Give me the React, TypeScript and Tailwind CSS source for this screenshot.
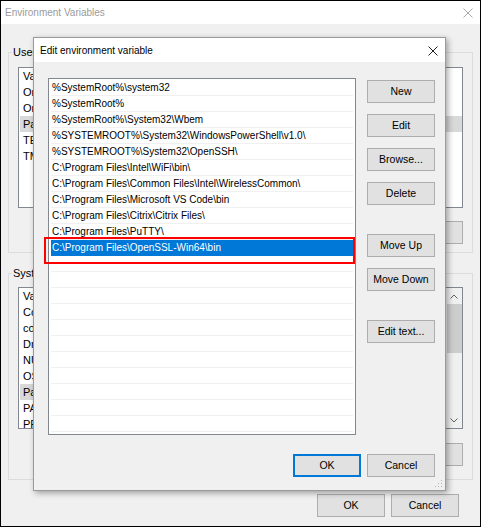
import React from 'react';

const font = "font-['Liberation_Sans',Arial,sans-serif]";

const CloseIcon = ({ color }: { color: string }) => (
  <svg width="10" height="10" viewBox="0 0 10 10" className="block">
    <path d="M0.5 0.5 L9.5 9.5 M9.5 0.5 L0.5 9.5" stroke={color} strokeWidth="1" fill="none" />
  </svg>
);

const Button = ({ label, def = false, w = 'w-[68px]' }: { label: string; def?: boolean; w?: string }) => (
  <div
    className={`${w} h-[23px] shrink-0 flex items-center justify-center bg-[#e1e1e1] border text-[10.5px] text-black ${
      def ? 'border-[#0078d7] shadow-[inset_0_0_0_1px_#0078d7]' : 'border-[#adadad]'
    }`}
  >
    {label}
  </div>
);

const userVars = ['Variable', 'OneDrive', 'OneDriveConsumer', 'Path', 'TEMP', 'TMP'];
const sysVars = ['Variable', 'ComSpec', 'configsetroot', 'DriverData', 'NUMBER_OF_PROCESSORS', 'OS', 'Path', 'PATHEXT', 'PROCESSOR_ARCHITECTURE'];

const paths = [
  '%SystemRoot%\\system32',
  '%SystemRoot%',
  '%SystemRoot%\\System32\\Wbem',
  '%SYSTEMROOT%\\System32\\WindowsPowerShell\\v1.0\\',
  '%SYSTEMROOT%\\System32\\OpenSSH\\',
  'C:\\Program Files\\Intel\\WiFi\\bin\\',
  'C:\\Program Files\\Common Files\\Intel\\WirelessCommon\\',
  'C:\\Program Files\\Microsoft VS Code\\bin',
  'C:\\Program Files\\Citrix\\Citrix Files\\',
  'C:\\Program Files\\PuTTY\\',
  'C:\\Program Files\\OpenSSL-Win64\\bin',
];

const OuterList = ({ items, height, scroll = false }: { items: string[]; height: string; scroll?: boolean }) => (
  <div className={`${height} bg-white border border-[#828790] flex overflow-hidden`}>
    <div className="flex-1 flex flex-col">
      {items.map((v, i) => (
        <div
          key={i}
          className={`h-[16px] leading-[17px] text-[11px] pl-[3px] ml-[1px] whitespace-nowrap ${v === 'Path' ? 'bg-[#d9d9d9]' : ''}`}
        >
          {v}
        </div>
      ))}
    </div>
    {scroll && (
      <div className="w-[16px] bg-[#f0f0f0] flex flex-col items-center">
        <div className="h-[16px] flex items-center justify-center">
          <svg width="8" height="5" viewBox="0 0 8 5"><path d="M0.5 4.5 L4 1 L7.5 4.5" stroke="#606060" fill="none" /></svg>
        </div>
        <div className="w-[15px] h-[49px] bg-[#cdcdcd]" />
        <div className="flex-1" />
        <div className="h-[16px] flex items-center justify-center">
          <svg width="8" height="5" viewBox="0 0 8 5"><path d="M0.5 0.5 L4 4 L7.5 0.5" stroke="#606060" fill="none" /></svg>
        </div>
      </div>
    )}
  </div>
);

const EditDialog = () => {
  const rows = Array.from({ length: 22 }, (_, i) => paths[i] ?? '');
  return (
    <div className="absolute left-[32px] top-[36px] w-[413px] h-[454px] border border-[#9a9a9a] bg-[#f0f0f0] shadow-[2px_2px_6px_rgba(0,0,0,0.35)] flex flex-col">
      {/* title bar */}
      <div className="h-[24px] bg-white flex items-center justify-between pl-[6px] pr-[7px] pt-[1px] text-[10px] text-black">
        <span>Edit environment variable</span>
        <CloseIcon color="#222" />
      </div>

      <div className="flex pt-[16px] pl-[14px]">
        {/* list */}
        <div className="w-[308px] h-[357px] bg-white border border-[#828790] overflow-hidden flex flex-col pt-[1px]">
          {rows.map((p, i) => (
            <div
              key={i}
              className={`h-[16px] shrink-0 mx-[2px] pl-[1px] leading-[16px] text-[10px] whitespace-nowrap ${
                i === 10 ? 'bg-[#0078d7] text-white' : 'text-black shadow-[inset_0_-1px_0_#f0f0f0]'
              }`}
            >
              {p}
            </div>
          ))}
        </div>

        {/* side buttons */}
        <div className="ml-[11px] pt-[2px] flex flex-col">
          <Button label="New" />
          <div className="h-[11px]" />
          <Button label="Edit" />
          <div className="h-[11px]" />
          <Button label="Browse..." />
          <div className="h-[11px]" />
          <Button label="Delete" />
          <div className="h-[29px]" />
          <Button label="Move Up" />
          <div className="h-[11px]" />
          <Button label="Move Down" />
          <div className="h-[29px]" />
          <Button label="Edit text..." />
        </div>
      </div>

      <div className="flex justify-end gap-[6px] mt-[19px] pr-[10px]">
        <Button label="OK" def />
        <Button label="Cancel" />
      </div>

      {/* highlight annotation */}
      <div className="absolute left-[10px] top-[199px] w-[311px] h-[27px] border-2 border-[#ff0000]" />

      {/* resize grip */}
      <svg width="10" height="10" viewBox="0 0 10 10" className="absolute right-[1px] bottom-[1px]">
        <rect x="7" y="1" width="1" height="1" fill="#b5b5b5" />
        <rect x="4" y="4" width="1" height="1" fill="#b5b5b5" />
        <rect x="7" y="4" width="1" height="1" fill="#b5b5b5" />
        <rect x="1" y="7" width="1" height="1" fill="#b5b5b5" />
        <rect x="4" y="7" width="1" height="1" fill="#b5b5b5" />
        <rect x="7" y="7" width="1" height="1" fill="#b5b5b5" />
      </svg>
    </div>
  );
};

export default function App() {
  return (
    <div className={`${font} relative w-[481px] h-[527px] border border-black bg-[#f0f0f0] overflow-hidden text-black`}>
      {/* outer title bar */}
      <div className="h-[23px] bg-white flex items-center justify-between pl-[4px] pr-[7px] text-[10px] text-[#9b9b9b]">
        <span>Environment Variables</span>
        <CloseIcon color="#a8a8a8" />
      </div>

      <div className="px-[7px]">
        <fieldset className="mt-[20px] border border-[#dcdcdc] px-[9px] pb-[8px]">
          <legend className="ml-[-6px] px-[1px] text-[11px] leading-[16px]">User variables for user</legend>
          <div className="pt-[7px]">
            <OuterList items={userVars} height="h-[141px]" />
          </div>
          <div className="flex justify-end gap-[7px] mt-[13px]">
            <Button label="New..." w="w-[75px]" />
            <Button label="Edit..." w="w-[75px]" />
            <Button label="Delete" w="w-[75px]" />
          </div>
        </fieldset>

        <fieldset className="mt-[12px] border border-[#dcdcdc] px-[9px] pb-[13px]">
          <legend className="ml-[-6px] px-[1px] text-[11px] leading-[16px]">System variables</legend>
          <div className="pt-[6px]">
            <OuterList items={sysVars} height="h-[142px]" scroll />
          </div>
          <div className="flex justify-end gap-[7px] mt-[14px]">
            <Button label="New..." w="w-[75px]" />
            <Button label="Edit..." w="w-[75px]" />
            <Button label="Delete" w="w-[75px]" />
          </div>
        </fieldset>

        <div className="flex justify-end gap-[6px] mt-[14px] pr-[14px]">
          <Button label="OK" />
          <Button label="Cancel" />
        </div>
      </div>

      <EditDialog />
    </div>
  );
}
